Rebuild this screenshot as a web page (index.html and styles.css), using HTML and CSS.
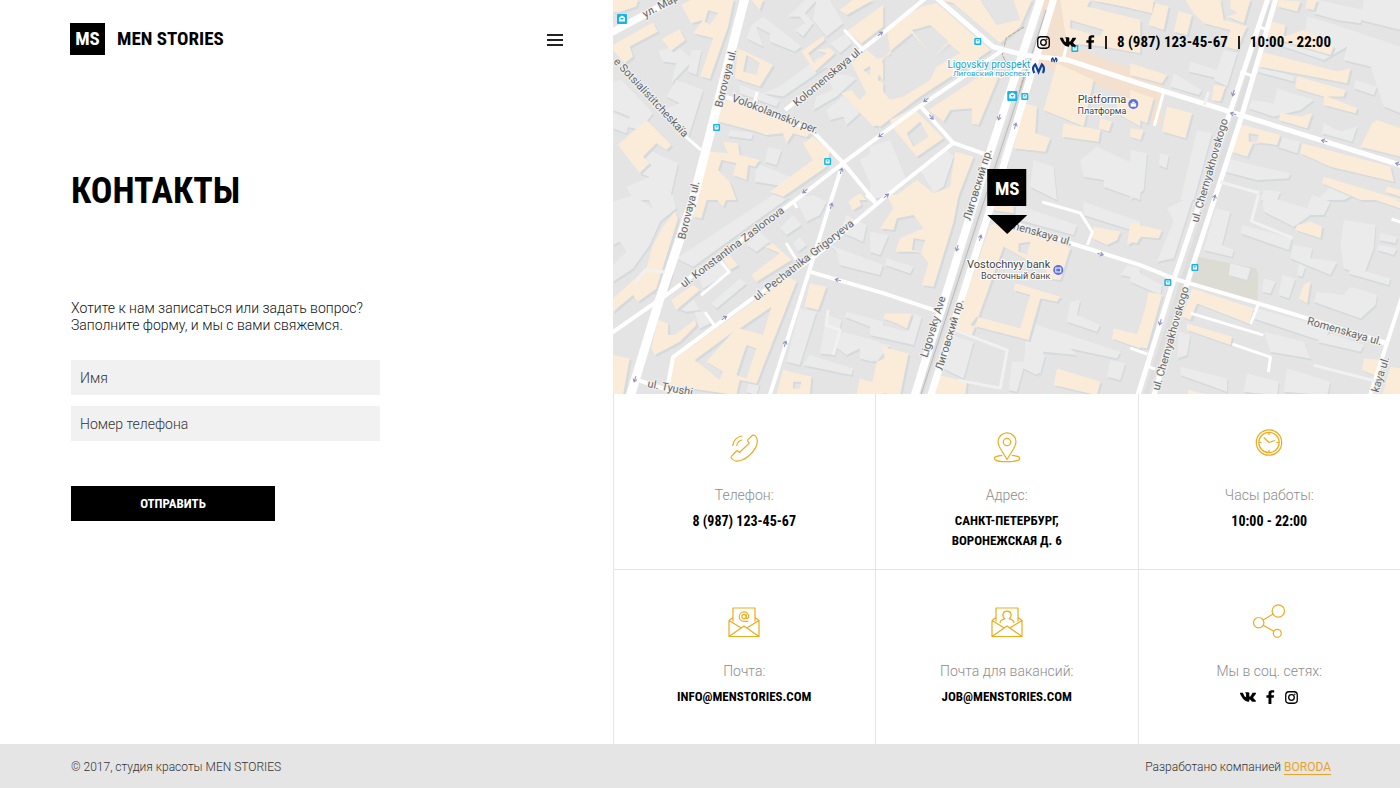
FILE: index.html
```html
<!DOCTYPE html>
<html lang="ru">
<head>
<meta charset="utf-8">
<meta name="viewport" content="width=device-width, initial-scale=1">
<title>Контакты — Men Stories</title>
<link rel="stylesheet" href="styles.css">
</head>
<body>
<svg class="sprite" aria-hidden="true">
  <symbol id="i-insta" viewBox="0 0 14 14"><rect x=".8" y=".8" width="12.4" height="12.4" rx="3.400" fill="none" stroke="currentColor" stroke-width="1.400"/><circle cx="7" cy="7" r="3" fill="none" stroke="currentColor" stroke-width="1.400"/><circle cx="10.600" cy="3.400" r=".8" fill="currentColor"/></symbol>
  <symbol id="i-vk" viewBox="0 0 16 10"><path fill="currentColor" d="M7.7 9.8h1s.3 0 .4-.2.1-.4.1-.4 0-1.400.6-1.600 1.400 1.300 2.200 1.900c.6.4 1.100.3 1.100.3l2.100 0s1.100-.1.6-1c0-.1-.3-.7-1.600-1.900-1.400-1.300-1.200-1.100.5-3.300C15.700 2.300 16.100 1.400 16 1 15.900.7 15.100.8 15.100.8l-2.400 0s-.2 0-.3.1-.2.3-.2.3-.4 1-.9 1.800c-1.100 1.800-1.500 1.900-1.700 1.800-.4-.3-.3-1.100-.3-1.700 0-1.800.3-2.500-.5-2.700C8.500.3 8.300.2 7.600.2 6.600.2 5.800.2 5.400.5c-.3.1-.5.5-.4.5.2 0 .6.1.8.4.3.4.3 1.200.3 1.200s.1 2.200-.4 2.500c-.3.2-.8-.2-1.700-1.900-.5-.8-.8-1.700-.8-1.700S3.100 1 3 .9 2.600.8 2.600.8L.4.800s-.300 0-.4.2 0 .4 0 .4 1.800 4.100 3.800 6.200c1.800 1.900 3.900 2.200 3.900 2.200z"/></symbol>
  <symbol id="i-fb" viewBox="0 0 9 14"><path fill="currentColor" d="M2.500 14V7.800H.4V5.200h2.100V3.500C2.500 1.300 3.800.2 5.900.2l2.300.1v2.300H6.700C5.600 2.600 5.400 3.100 5.400 3.800v1.400h2.700l-.4 2.600H5.400V14z"/></symbol>
</svg>

<main class="page">
  <section class="panel">
    <header class="header">
      <a class="logo" href="#"><span class="logo-mark">MS</span><span>MEN STORIES</span></a>
      <button class="menu" type="button" aria-label="Меню"><span></span><span></span><span></span></button>
    </header>
    <div class="content">
      <h1 class="title">КОНТАКТЫ</h1>
      <p class="intro">Хотите к нам записаться или задать вопрос?<br>Заполните форму, и мы с вами свяжемся.</p>
      <form class="form">
        <input class="field" type="text" placeholder="Имя" aria-label="Имя">
        <input class="field" type="tel" placeholder="Номер телефона" aria-label="Номер телефона">
        <button class="submit" type="submit">ОТПРАВИТЬ</button>
      </form>
    </div>
  </section>

  <section class="side">
    <div class="map">
      <svg class="map-canvas" viewBox="613 0 787 394" preserveAspectRatio="xMidYMid slice" role="img" aria-label="Карта: Воронежская д. 6">
        <defs>
          <g id="plain">
            <path transform="translate(613 0) scale(.33333)" d="M135 155 190 135 240 180 175 250 190 190 150 185zM525 50 575 0 610 0 575 40 600 70 570 110 545 90 575 70 560 50zM610 0 650 0 690 70 640 110 600 60zM415 75 450 50 565 140 545 155 470 125 470 100 430 80 450 140 400 115zM0 245 25 240 120 340 80 390 40 380 50 350 0 330zM160 290 190 240 270 270 225 415 150 330 200 310zM640 330 700 280 750 330 700 375 690 350 650 360zM465 440 505 450 490 495 455 485zM430 490 530 530 520 560 425 545zM110 450 150 470 195 490 170 600 60 600 40 560 110 530 80 520zM0 340 50 360 40 400 0 385zM740 480 810 440 810 560 770 550zM640 220 700 225 730 235 670 290 600 330 610 290 660 270zM380 255 500 300 490 320 380 280zM350 390 420 400 415 418 345 408zM235 150 265 150 250 225 225 215zM500 260 620 170 640 200 510 290 450 280zM650 130 700 100 715 130 680 160zM400 330 440 270 430 330z"/>
            <path transform="translate(870 0) scale(.33333)" d="M630 480 680 440 810 500 810 600 700 560 700 540 640 530zM0 440 60 420 110 540 40 590 0 600 0 520 40 500 30 480 0 480zM150 510 230 450 250 470 220 560 190 580zM490 480 550 500 560 600 480 560zM400 400 420 420 410 500 390 480z"/>
            <path transform="translate(1130 0) scale(.33333)" d="M530 50 600 70 810 140 810 340 760 320 720 200 640 180 650 140 580 180 430 130 440 110 520 130zM560 0 700 30 690 70 620 60 550 40zM700 0 810 0 810 90 690 60zM440 265 550 300 510 330 450 345 430 350 355 325 365 300 430 310zM180 185 270 215 285 240 175 215zM130 220 215 270 205 285 120 260zM675 240 740 260 730 285 670 265zM580 370 630 395 680 380 665 425 575 400zM290 475 390 500 480 520 475 535 380 540 285 515zM280 150 320 160 290 260 250 240zM200 390 245 400 190 600 150 600zM0 450 50 460 40 570 0 600zM90 460 115 465 108 505 85 495zM450 410 510 425 500 460 440 440zM390 200 490 230 490 245 380 215zM600 560 680 580 640 600 560 600zM400 570 450 575 440 600 390 600z"/>
            <path transform="translate(613 195) scale(.33333)" d="M0 20 60 0 150 60 110 150 60 220 0 260 0 210 40 170 20 140 0 150zM100 0 180 0 190 40 140 80zM190 190 480 0 530 5 240 215zM255 240 330 200 345 235 270 280zM295 325 380 250 400 265 310 340zM400 150 440 110 470 140 430 170zM195 340 240 310 260 345 220 350zM245 350 280 350 300 380 260 400zM500 100 540 60 565 90 520 120zM540 145 560 125 580 150 555 170zM560 340 610 350 560 510 520 500zM640 360 685 375 665 480 620 475zM650 150 810 210 800 240 680 210 670 170zM590 480 720 520 715 540 570 510zM700 350 810 380 810 410 695 365zM545 10 600 0 640 20 620 60 580 80zM690 410 800 440 780 500 740 490 740 460 700 480 660 450zM410 550 440 565 430 600 400 590zM700 60 760 90 750 140 680 110zM100 215 180 230 160 300 120 290z"/>
            <path transform="translate(870 195) scale(.33333)" d="M0 110 55 120 30 180 0 170zM50 190 130 215 120 235 45 210zM130 355 155 365 130 450 0 420 0 380 110 410zM470 380 750 470 740 490 600 460 620 480 520 470 500 540 460 520zM600 320 630 315 620 360 690 390 680 410 590 380zM425 500 465 500 440 590 415 585zM480 470 525 480 510 535 480 530zM720 495 765 505 750 555 710 545zM240 420 310 440 280 550 220 520zM640 20 810 80 800 110 640 60zM440 30 620 90 610 120 430 70zM770 210 810 220 810 250 750 240zM0 440 60 450 20 500 0 490z"/>
            <path transform="translate(1130 195) scale(.33333)" d="M255 40 300 50 275 150 310 165 305 185 220 165zM335 90 485 130 475 165 330 115zM395 0 530 40 545 0 600 20 580 60 540 60 490 95 400 50zM640 75 735 90 730 160 700 240 640 220 630 150zM490 150 545 160 540 190 620 200 600 240 480 190zM300 205 360 220 350 255 295 240zM400 250 435 260 420 295 395 290zM455 240 495 250 475 310 445 300zM505 205 525 215 515 245 500 240zM560 290 640 300 660 275 740 300 735 330 690 370 550 320zM380 340 600 400 580 440 370 370zM600 415 700 450 690 470 560 440zM400 410 520 440 540 490 420 470zM145 410 180 420 170 480 140 490zM350 535 445 560 440 600 340 590zM470 520 600 560 590 600 460 590zM150 515 290 550 290 590 150 540zM110 40 190 0 130 190 80 200 100 150 130 80zM750 115 800 125 795 145 745 135zM745 150 800 160 790 180 740 165zM660 215 780 250 775 270 655 235zM0 220 95 270 90 300 0 260z"/>
          </g>
          <g id="warm">
            <path fill-rule="evenodd" transform="translate(613 0) scale(.33333)" d="M0 0 75 0 70 20 15 38 0 35zM0 135 120 68 135 95 50 140 60 170 35 190 0 150zM145 118 200 88 217 120 175 152zM205 15 235 0 362 0 345 80 290 237 262 228 300 115 240 100 270 60 235 70zM285 30 315 40 290 75 275 65zM375 145 480 195 440 260 365 235zM400 165 440 190 430 225 390 215zM330 290 480 345 590 400 580 412 540 400 520 430 510 400 460 405 430 395 315 365zM290 455 345 460 330 425 375 430 380 465 440 480 425 500 405 495 400 540 360 525 370 490 325 480 315 510 350 545 370 600 245 600zM100 360 175 435 160 450 130 430 90 470 110 490 80 518 15 435zM570 430 600 410 650 455 640 500 510 590 470 575 600 480zM415 0 450 0 440 30zM565 155 630 108 635 120 585 160 605 190 640 160 610 150 650 145 665 160 605 215zM700 95 810 15 810 80 745 130zM680 30 720 0 780 0 700 45zM715 190 760 150 810 190 810 240 775 195 750 210 785 235 810 250 810 370 780 380 685 280 715 270 740 300 760 280zM710 600 740 580 760 600z"/>
            <path fill-rule="evenodd" transform="translate(870 0) scale(.33333)" d="M50 80 155 20 200 10 360 150 280 205 150 290 30 380 0 370 0 190 60 160zM40 170 100 120 125 100 190 170 235 130 270 160 200 200 180 240 100 290 60 300 20 250zM215 0 485 0 450 80 390 130 250 10zM330 0 430 0 450 60 380 75zM60 360 130 325 220 415 140 470 65 380zM110 400 150 365 175 410 130 440zM175 330 350 215 385 230 325 375 305 370 305 325 240 330 220 365zM255 455 310 470 260 600 60 600 140 540 190 580 240 560zM570 0 810 0 810 160 700 140 590 130zM600 60 700 90 690 110 600 85zM660 0 810 30 810 60 650 20zM560 190 670 240 640 380 520 330zM460 310 500 320 495 400 540 415 525 455 430 445zM580 370 690 390 685 425 575 410zM690 355 725 365 715 395 685 385zM740 290 810 300 810 380 740 340zM125 90 180 75 235 125 190 170z"/>
            <path fill-rule="evenodd" transform="translate(1130 0) scale(.33333)" d="M0 0 70 0 65 40 0 25zM75 10 115 20 100 90 55 75zM145 35 185 45 170 105 130 95zM165 0 270 0 280 60 350 80 340 100 320 150 285 140 300 90 220 70 190 40zM300 0 360 0 340 70 290 50 320 40 300 25zM445 0 510 5 500 35 440 20zM530 0 560 0 550 30 525 25zM420 65 465 75 460 110 520 90 610 140 600 165 410 110zM390 155 620 215 660 205 650 250 600 240 385 200zM500 230 645 270 640 290 590 290 680 325 675 340 580 315 580 290 495 265zM450 340 510 350 545 340 530 385 445 360zM725 370 740 360 810 385 810 470 690 440zM320 370 450 405 440 435 370 425 350 470 305 455zM355 400 385 405 380 430 355 425zM515 430 780 500 790 545 600 500 510 460zM0 190 110 225 95 250 0 225zM0 270 70 295 50 370 0 350zM110 320 185 340 165 415 95 395zM250 255 285 260 270 305 245 300zM580 530 810 600 690 600 575 550zM0 385 40 390 30 420 0 410zM770 560 810 570 810 590 765 575z"/>
            <path fill-rule="evenodd" transform="translate(613 195) scale(.33333)" d="M185 50 195 70 130 280 75 320 60 300 0 350 0 310 100 220 120 150 150 95zM245 0 285 0 265 70 240 65zM300 0 345 0 330 35zM330 190 350 180 375 210 350 225zM415 240 500 175 455 155 480 145 535 195 430 260zM175 315 240 270 260 285 190 345zM135 375 165 385 165 420 185 420 245 375 250 390 200 440 125 480 115 460zM185 490 525 245 550 260 430 565 380 555 370 600 165 570zM380 400 475 335 450 420zM245 495 360 410 280 500 330 530 320 555zM400 450 430 460 400 550 370 540zM590 265 640 275 615 345 575 335zM510 525 595 545 590 600 490 600zM540 560 565 560 560 580 540 580zM0 480 50 490 30 600 0 600zM705 20 735 5 745 30 720 45zM740 550 810 570 810 600 730 600z"/>
            <path fill-rule="evenodd" transform="translate(870 195) scale(.33333)" d="M50 0 265 0 250 80 190 275 155 270 175 205 150 170 75 170 90 130 160 100 130 60 80 70 70 105 30 100 70 40zM130 130 165 135 155 170 125 165zM360 90 440 80 600 160 570 255 535 250 520 200 480 200 400 155 305 420 255 400zM445 145 480 140 470 180 445 170zM365 10 430 30 430 55 365 45zM435 265 570 305 560 320 510 310 475 435 300 390 320 365 450 400 480 300 430 285zM45 355 125 355 110 400 80 385 40 370zM35 455 115 475 90 600 0 590 20 500 45 490zM205 540 290 560 285 600 190 600zM560 520 690 560 680 600 550 570zM670 95 750 110 740 135 710 150 665 130zM730 400 810 420 810 460 725 430zM780 85 810 85 810 130 770 150z"/>
            <path fill-rule="evenodd" transform="translate(1130 195) scale(.33333)" d="M0 85 95 105 85 130 30 125 20 145 0 140zM500 90 540 80 575 95 570 130 495 105zM55 290 95 300 50 460 0 450 0 410 20 420 45 340zM185 280 370 340 355 385 200 325 180 375 155 365zM170 385 305 425 300 450 170 405zM520 270 540 260 530 325 505 310zM700 490 750 495 740 545 695 525zM690 0 750 0 810 20 810 40zM780 515 810 520 810 600 755 600zM175 585 235 600 170 600z"/>
          </g>
          <g id="bus"><rect width="7" height="7" rx="1" fill="#13b5ea"/><path d="M1.500 1.500h4v4h-4z" fill="#fff"/><path d="M2.500 2.300h2v1.200h-2z" fill="#13b5ea"/></g>
          <g id="arrow"><path d="M-3 0H3M0-2 3 0 0 2" fill="none" stroke="#8b90c2" stroke-width="1"/></g>
        </defs>

        <rect class="m-land" x="613" width="787" height="394"/>
        <path class="m-plaza" d="M1042 0h30l-5 45 96 35-2 45-25-6-8-22-72-26-22-8z"/>
        <path class="m-park" d="M1198 257 1255 268 1258 273 1257 302 1190 285z"/>
        <use href="#plain" class="m-shade" x="1" y="2"/>
        <use href="#plain" class="m-plain"/>
        <use href="#warm" class="m-shade" x="2" y="2"/>
        <use href="#warm" class="m-warm"/>

        <g class="m-median">
          <path d="M1046 10 921 394M1271 5 1146 394" stroke="#dedede" stroke-width="5"/>
          <path d="M1046 10 921 394" stroke="#b9b9b9" stroke-width="1"/>
          <path d="M1024 27 1006 38 1002 55 1010 70M1038 12 1031 33M1024 75 1019 92" stroke="#b7ad90" stroke-width="1" stroke-dasharray="4 1"/>
        </g>
        <g class="m-roads">
          <path stroke-width="9" d="M745-3 693 200 660 298 630 397"/>
          <path stroke-width="7" d="M609 34 680-4"/>
          <path stroke-width="8" d="M1041-3 985 167 914 397"/>
          <path stroke-width="7" d="M1054-3 1003 167 930 397"/>
          <path stroke-width="5" d="M1268-3 1228 117 1174 278 1137 397M1276-3 1241 117 1187 282 1153 397M935-3 993 47 1023 55 1067 60 1140 84 1230 112 1403 166"/>
          <path stroke-width="4" d="M785 110 883 33 927-3M726 97 770 111 813 132 843 163 875 202M610 334 666 295 793 202 843 163 920 106 1003 50M668 384 673 357 753 298 813 258 885 197 953 143M920 106 953 143 987 155M843 163 831 200 810 268 769 397M811 272 883 293 943 313M1010 222 1070 243 1140 265 1175 279 1257 303 1387 343M1403 292 1369 397M638 380 690 397"/>
          <path stroke-width="3" d="M680 132 701 150M757 92 753 108M844 30 861 48M1163 93 1154 126M1258 27 1268 30M1240 72 1255 77M1067 43 1063 59M1042 202 1080 213 1092 232 1087 245M1190 313 1263 335M1232 344 1270 357 1268 372M1130 348 1147 354M1147 366 1155 369M786 243 797 261M793 201 797 208M720 260 729 272 701 295M705 312 714 325M1258 304 1250 324M1391 219 1400 222M866 195 876 204M1372 342 1388 344"/>
          <path class="m-lane" d="M955 330 1007 350 1000 388 958 380M1258 195 1251 221 1292 238M1220 182 1259 193M1208 92 1204 105M1313 365 1375 381M828 310 826 325 840 330 833 355M634 284 645 270 665 272"/>
        </g>
        <g>
          <use href="#arrow" transform="translate(880 34) rotate(-38)"/><use href="#arrow" transform="translate(881 135) rotate(142)"/><use href="#arrow" transform="translate(926 100) rotate(142)"/><use href="#arrow" transform="translate(931 117) rotate(50)"/><use href="#arrow" transform="translate(999 117) rotate(107)"/><use href="#arrow" transform="translate(1015 126) rotate(-73)"/><use href="#arrow" transform="translate(1233 93) rotate(107)"/><use href="#arrow" transform="translate(1233 114) rotate(196)"/><use href="#arrow" transform="translate(1324 141) rotate(196)"/><use href="#arrow" transform="translate(1398 164) rotate(196)"/><use href="#arrow" transform="translate(841 171) rotate(-73)"/><use href="#arrow" transform="translate(805 191) rotate(142)"/><use href="#arrow" transform="translate(886 196) rotate(-38)"/><use href="#arrow" transform="translate(831 206) rotate(-73)"/><use href="#arrow" transform="translate(838 280) rotate(196)"/><use href="#arrow" transform="translate(724 318) rotate(-36)"/><use href="#arrow" transform="translate(785 344) rotate(-73)"/><use href="#arrow" transform="translate(635 379) rotate(107)"/><use href="#arrow" transform="translate(957 248) rotate(107)"/><use href="#arrow" transform="translate(980 238) rotate(-73)"/><use href="#arrow" transform="translate(1100 254) rotate(16)"/><use href="#arrow" transform="translate(1214 198) rotate(-73)"/><use href="#arrow" transform="translate(1160 322) rotate(107)"/>
        </g>
        <g>
          <use href="#bus" x="713" y="124"/><use href="#bus" x="824" y="158"/><use href="#bus" x="974" y="38"/><use href="#bus" x="1071" y="45"/><use href="#bus" x="1021" y="93"/><use href="#bus" x="1191" y="264"/><use href="#bus" x="1164" y="279"/>
          <g fill="#13b5ea"><rect x="617" y="14" width="10" height="10" rx="1"/><rect x="1007" y="91" width="10" height="10" rx="1"/></g>
          <path d="M619 17.500 622 15.500 625 17.500V21.500H619zM1009 94.500 1012 92.500 1015 94.500V98.500H1009z" fill="#fff"/>
          <path d="M620.500 18.500h3M622 18v2M1010.500 95.500h3M1012 95v2" stroke="#13b5ea"/>
        </g>
        <g class="m-street">
          <text transform="translate(645 18) rotate(-28)">ул. Мар</text>
          <text transform="translate(613 62) rotate(47)">e Sotsialistitcheskaïa</text>
          <text transform="translate(722 108) rotate(-76)">Borovaya ul.</text>
          <text transform="translate(685 240) rotate(-76)">Borovaya ul.</text>
          <text transform="translate(731 101) rotate(21)">Volokolamskiy per.</text>
          <text transform="translate(797 107) rotate(-40)">Kolomenskaya ul.</text>
          <text transform="translate(684 288) rotate(-37)">ul. Konstantina Zaslonova</text>
          <text transform="translate(757 301) rotate(-38)">ul. Pechatnika Grigoryeva</text>
          <text transform="translate(647 387) rotate(11)">ul. Tyushi</text>
          <text transform="translate(970 221) rotate(-73)">Лиговский пр.</text>
          <text transform="translate(927 358) rotate(-73)">Ligovsky Ave</text>
          <text transform="translate(942 371) rotate(-73)">Лиговский пр.</text>
          <text transform="translate(1198 223) rotate(-74)">ul. Chernyakhovskogo</text>
          <text transform="translate(1159 391) rotate(-74)">ul. Chernyakhovskogo</text>
          <text transform="translate(1306 324) rotate(16)">Romenskaya ul.</text>
          <text transform="translate(1009 228) rotate(16)">menskaya ul.</text>
          <text transform="translate(1378 393) rotate(-73)">kaya ul.</text>
        </g>
        <g class="m-place" text-anchor="end">
          <text class="m-metro" x="1030" y="68">Ligovskiy prospekt</text>
          <text class="m-metro m-small" x="1030" y="76">Лиговский проспект</text>
          <text x="1126" y="103">Platforma</text>
          <text class="m-small" x="1126" y="114">Платформа</text>
          <text x="1050" y="268">Vostochnyy bank</text>
          <text class="m-small" x="1050" y="279">Восточный банк</text>
        </g>
        <g>
          <circle cx="1133" cy="104" r="5" fill="#5b6fe0"/><path d="M1130.500 103.500h5v3h-5zM1132 103v-1h2v1" fill="#fff" stroke="#fff" stroke-width=".5"/>
          <circle cx="1058" cy="270" r="5" fill="#5b6fe0"/><path d="M1055.500 268h5v4h-5z" fill="none" stroke="#fff"/>
          <path d="M1034 73c-2-4-1-7 1-8.500l3.300 7.500 3.300-7.500c2 1.500 3 5 1 8.500" fill="none" stroke="#123f97" stroke-width="2.200"/>
          <path d="M1052 62c-1.200-2-.6-3.300.4-4l1.600 3.400 1.600-3.400c1 .7 1.600 2 .4 4" fill="none" stroke="#123f97" stroke-width="1.200"/>
        </g>
        <rect x="987" y="169" width="39" height="37"/>
        <path d="M987 215h40l-20 19z"/>
        <text class="pin-text" x="1007" y="195" text-anchor="middle">MS</text>
      </svg>
      <div class="topbar">
        <a href="#" aria-label="Instagram"><svg class="s-insta"><use href="#i-insta"/></svg></a>
        <a href="#" aria-label="ВКонтакте"><svg class="s-vk"><use href="#i-vk"/></svg></a>
        <a href="#" aria-label="Facebook"><svg class="s-fb"><use href="#i-fb"/></svg></a>
        <span class="bar"></span>
        <a href="tel:89871234567">8 (987) 123-45-67</a>
        <span class="bar"></span>
        <span>10:00 - 22:00</span>
      </div>
    </div>

    <div class="cards">
      <div class="card">
        <svg class="icon" viewBox="0 0 40 40"><path d="M29.500 8c1.500.5 3.500 2.200 3.800 5.500.4 4.500-3.300 10.500-7.800 14.800S15 34.700 11.500 34c-2-.4-3.300-1.500-4.300-3.300-.3-.7-.2-1 .3-1.500l5-5.200c.5-.5.800-.4 1.200 0l1.800 1.500 9.700-9.400-1.400-2c-.4-.6-.4-.9.1-1.400l4.700-4.500c.3-.3.500-.4.900-.2zM8.700 19C9 13.500 13 9.400 18.300 9M12.700 19c.3-3.200 2.600-5.600 5.600-6"/></svg>
        <p class="label">Телефон:</p>
        <p class="value value-number">8 (987) 123-45-67</p>
      </div>
      <div class="card">
        <svg class="icon" viewBox="0 0 40 40"><path d="M20 32.500 13.300 21.500C11.500 18.300 11 16.500 11 14.700a9 8.800 0 0 1 18 0c0 1.800-.5 3.600-2.300 6.800zM15.300 28.300c-4.500.4-8 1.500-8 3.100 0 1.900 5.600 3.300 12.700 3.300s12.700-1.400 12.700-3.300c0-1.600-3.500-2.700-8-3.100"/><circle cx="20" cy="15" r="3.700"/></svg>
        <p class="label">Адрес:</p>
        <p class="value">САНКТ-ПЕТЕРБУРГ,<br>ВОРОНЕЖСКАЯ Д. 6</p>
      </div>
      <div class="card">
        <svg class="icon" viewBox="0 0 40 40"><circle cx="20" cy="15.500" r="12.700"/><circle cx="20" cy="15.500" r="10.200"/><path d="M14.800 10.500 20 15.500l5.800-2M20 5.500V8M20 23v2.500M10 15.500h2.500M27.500 15.500H30"/></svg>
        <p class="label">Часы работы:</p>
        <p class="value value-number">10:00 - 22:00</p>
      </div>
      <div class="card">
        <svg class="icon" viewBox="0 0 40 40"><path d="M9 18.500V5h22v13.500M5 17.500V33.500H35V17.500L31 14.500M5 17.500 9 14.500M5 17.500 17.300 25M35 17.500 22.700 25M5 33.500 20 23 35 33.500"/><circle cx="20" cy="13.500" r="2.200"/><path d="M22.200 11.300v3c0 1.800 2.500 1.600 2.500-.8A4.700 4.700 0 1 0 20 18.300h4.300"/></svg>
        <p class="label">Почта:</p>
        <a class="value" href="mailto:info@menstories.com">INFO@MENSTORIES.COM</a>
      </div>
      <div class="card">
        <svg class="icon" viewBox="0 0 40 40"><path d="M9 18.500V5h22v13.500M5 17.500V33.500H35V17.500L31 14.500M5 17.500 9 14.500M5 17.500 17.300 25M35 17.500 22.700 25M5 33.500 20 23 35 33.500"/><path d="M13 20c.2-3 1.800-3.600 4.800-4.200-3-2.300-2.600-7.700 2.200-7.700s5.200 5.400 2.200 7.700c3 .6 4.600 1.200 4.800 4.200"/></svg>
        <p class="label">Почта для вакансий:</p>
        <a class="value" href="mailto:job@menstories.com">JOB@MENSTORIES.COM</a>
      </div>
      <div class="card">
        <svg class="icon" viewBox="0 0 40 40"><circle cx="29.300" cy="8" r="6.200"/><circle cx="9.700" cy="19.700" r="5.200"/><circle cx="28.300" cy="30.300" r="4"/><path d="M14.200 17 24 11M14.200 22.300 24.800 28.300"/></svg>
        <p class="label">Мы в соц. сетях:</p>
        <div class="socials">
          <a href="#" aria-label="ВКонтакте"><svg class="s-vk"><use href="#i-vk"/></svg></a>
          <a href="#" aria-label="Facebook"><svg class="s-fb"><use href="#i-fb"/></svg></a>
          <a href="#" aria-label="Instagram"><svg class="s-insta"><use href="#i-insta"/></svg></a>
        </div>
      </div>
    </div>
  </section>
</main>

<footer class="footer">
  <span>© 2017, студия красоты MEN STORIES</span>
  <span>Разработано компанией <a class="credit" href="#">BORODA</a></span>
</footer>
</body>
</html>
```
FILE: styles.css
```css
:root {
  --narrow: "Liberation Sans Narrow", "Roboto Condensed", "Open Sans Condensed", "DejaVu Sans Condensed", sans-serif;
  --text: Roboto, "Noto Sans", sans-serif;
}

* { box-sizing: border-box; }

body {
  margin: 0;
  min-height: 100vh;
  display: flex;
  flex-direction: column;
  background: #fff;
  color: #000;
  font: 300 14px/17px var(--text);
}

a { color: inherit; text-decoration: none; }
p { margin: 0; }
svg { display: block; }
.sprite { display: none; }

.page {
  flex: 1;
  display: grid;
  grid-template-columns: 7fr 9fr;
}

.header {
  display: flex;
  justify-content: space-between;
  align-items: center;
  padding: 23px 50px 0 70px;
}

.logo {
  display: flex;
  align-items: center;
  gap: 12px;
  font: 700 19px/32px var(--narrow);
}

.logo-mark {
  width: 35px;
  background: #000;
  color: #fff;
  text-align: center;
}

.menu {
  display: grid;
  gap: 3px;
  padding: 2px 0 0;
  border: 0;
  background: none;
}

.menu span {
  width: 16px;
  height: 2px;
  background: #222;
}

.content { padding: 116px 50px 40px 71px; }

.title {
  margin: 0 0 89px;
  font: 700 36px/40px var(--narrow);
}

.intro {
  margin-bottom: 26px;
  color: #111;
}

.form {
  display: grid;
  gap: 11px;
  max-width: 309px;
}

.field {
  width: 100%;
  height: 35px;
  padding: 0 9px;
  border: 0;
  background: #f1f1f1;
  color: #333;
  font: 300 14px/20px var(--text);
}

.field::placeholder { color: #333; opacity: 1; }

.submit {
  width: 204px;
  height: 35px;
  margin-top: 34px;
  border: 0;
  background: #000;
  color: #fff;
  font: 700 13px/20px var(--narrow);
}

.side {
  display: flex;
  flex-direction: column;
}

.map {
  position: relative;
  height: 50vh;
  overflow: hidden;
}

.map-canvas { width: 100%; height: 100%; }
.m-land { fill: #e4e4e4; }
.m-plaza { fill: #f3e0cf; }
.m-park { fill: #dcdcd5; }
.m-shade { fill: #d5dadd; }
.m-plain { fill: #ebebeb; }
.m-warm { fill: #fbecda; }
.m-median { fill: none; }
.m-roads { fill: none; stroke: #fff; stroke-linejoin: round; }
.m-lane { stroke: #f1f1f1; stroke-width: 3; }

.m-street {
  font: 400 11px var(--text);
  fill: #666;
  stroke: #f2f2f2;
  stroke-width: 2px;
  paint-order: stroke;
}

.m-place {
  font: 400 11px var(--text);
  fill: #444;
  stroke: #fff;
  stroke-width: 2px;
  paint-order: stroke;
}

.m-small { font-size: 9px; }
.m-metro { font-size: 10px; fill: #14a5d0; }
.m-metro.m-small { font-size: 8px; }
.pin-text { font: 700 19px var(--narrow); fill: #fff; }

.topbar {
  position: absolute;
  top: 32px;
  right: 69px;
  display: flex;
  align-items: center;
  gap: 10px;
  font: 700 15px/20px var(--narrow);
}

.bar {
  width: 2px;
  height: 13px;
  background: #222;
}

.s-insta { width: 13px; height: 13px; }
.s-vk { width: 16px; height: 10px; }
.s-fb { width: 9px; height: 14px; }

.cards {
  flex: 1;
  display: grid;
  grid-template-columns: repeat(3, 1fr);
  grid-template-rows: 1fr 1fr;
}

.card {
  display: flex;
  flex-direction: column;
  align-items: center;
  padding: 33px 10px 18px;
  border-left: 1px solid #e5e5e5;
  text-align: center;
}

.card:nth-child(n+4) { border-top: 1px solid #e5e5e5; }

.icon {
  width: 40px;
  height: 40px;
  margin-bottom: 18px;
  fill: none;
  stroke: #eeab1c;
  stroke-width: 1.2;
  stroke-linejoin: round;
}

.label {
  margin-bottom: 6px;
  color: #8c8c8c;
  line-height: 20px;
}

.value { font: 700 13px/20px var(--narrow); }
.value-number { font-size: 14px; }

.socials {
  display: flex;
  align-items: center;
  gap: 10px;
  height: 20px;
}

.footer {
  display: flex;
  justify-content: space-between;
  align-items: center;
  flex-wrap: wrap;
  min-height: 44px;
  padding: 7px 69px 4px 71px;
  background: #e5e5e5;
  color: #333;
  font-size: 12px;
}

.credit {
  border-bottom: 1px solid #e9a32a;
  color: #e9a32a;
  font-weight: 400;
}
```
